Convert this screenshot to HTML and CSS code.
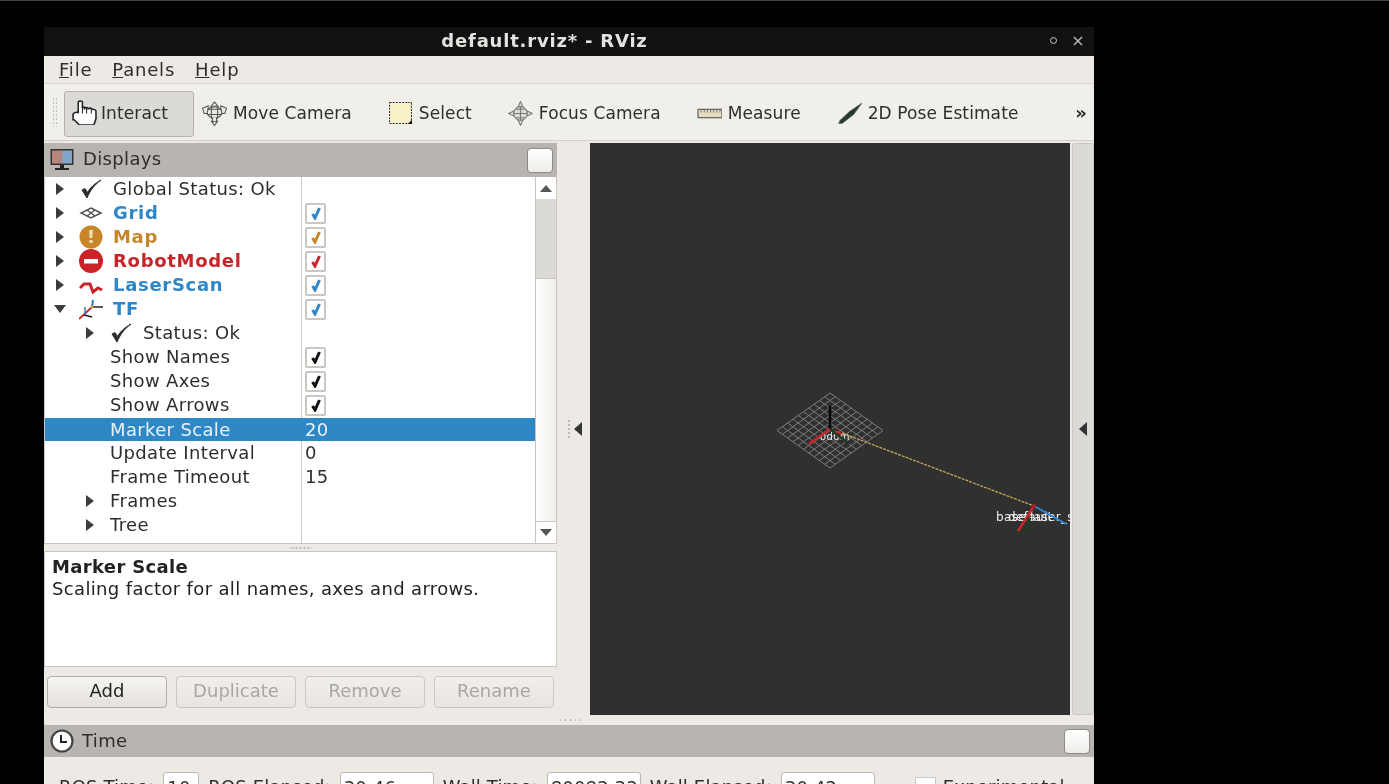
FILE: index.html
```html
<!DOCTYPE html>
<html lang="en">
<head>
    <meta charset="UTF-8">
    <title>default.rviz* - RViz</title>
    <link rel="stylesheet" href="styles.css">
</head>
<body>
<svg class="defs" width="0" height="0">
    <symbol id="tick" viewBox="0 0 14 14"><path d="M3.500 8 L6 12 L10.500 2" fill="none" stroke="currentColor" stroke-width="3"/></symbol>
    <symbol id="bigtick" viewBox="0 0 24 24"><path d="M3 13 L8 21 C11 14 15 8 22 3 C15 7 11 11 8.500 15.500 L6 11.500 Z" fill="#2b2f2b" stroke="#2b2f2b"/></symbol>
</svg>
<div class="window">
    <div class="titlebar">
        <span class="title">default.rviz* - RViz</span>
        <span class="win-btns"><span class="win-dot"></span><span class="win-x">×</span></span>
    </div>
    <div class="menubar">
        <span><u>F</u>ile</span>
        <span><u>P</u>anels</span>
        <span><u>H</u>elp</span>
    </div>
    <div class="toolbar">
        <div class="grip"></div>
        <div class="tool active">
            <svg class="tool-icon" viewBox="0 0 24 24"><path d="M6 12 V2.500 C6 0.500 10 0.500 10 2.500 V7 L12 7 V8 C13 7 15 7 15.500 8.500 C17 7.500 18.500 7.500 19 9 C21 8.500 23 9.500 23 11 V18 L21 24 H7 L2 19 H1 V13.500 C2 12 4.500 11.500 6 12 Z" fill="#fff" stroke="#222" stroke-width="1.500"/><path d="M10 7 V13 M14 8 V13 M18.500 9 V13" stroke="#222"/></svg>
            <span>Interact</span>
        </div>
        <div class="tool">
            <svg class="tool-icon" viewBox="0 0 24 24"><g fill="#e9e7e2" stroke="#555" stroke-width="1"><path d="M12 1 L15.500 5 H8.500 Z"/><path d="M12 23.500 L15 19.500 H9 Z"/><path d="M0.500 7 L6 4.500 V12 H2 Z"/><path d="M23.500 7 L18 4.500 V12 H22 Z"/><ellipse cx="12" cy="11" rx="7" ry="5.500"/><path d="M9 5.500 V17 M15 5.500 V17 M5 8 H19 M5 13 H19 M10 16 V20 H14 V16"/></g></svg>
            <span>Move Camera</span>
        </div>
        <div class="tool">
            <svg class="tool-icon" viewBox="0 0 24 24"><rect x="1.500" y="1.500" width="21" height="20" fill="#f7f2c8" stroke="#333" stroke-width="1" stroke-dasharray="2 1"/><path d="M19 22 H23 V18 Z" fill="#111"/></svg>
            <span>Select</span>
        </div>
        <div class="tool">
            <svg class="tool-icon" viewBox="0 0 24 24"><g fill="#dedcd7" stroke="#777" stroke-width="1"><path d="M12 0.500 L14.500 6 H9.500 Z"/><path d="M12 23.500 L14.500 18 H9.500 Z"/><path d="M0.500 12 L6 9.500 V14.500 Z"/><path d="M23.500 12 L18 9.500 V14.500 Z"/><circle cx="12" cy="12" r="6.500"/><path d="M12 5.500 V18.500 M5.500 12 H18.500 M8 8 H16 M8 16 H16"/></g></svg>
            <span>Focus Camera</span>
        </div>
        <div class="tool">
            <svg class="tool-icon" viewBox="0 0 24 24"><rect x="1" y="8" width="23" height="8" fill="#e6dcc0" stroke="#666" stroke-width="1.200"/><path d="M4 8.500 V11 M7 8.500 V11 M10 8.500 V11 M13 8.500 V11 M16 8.500 V11 M19 8.500 V11 M22 8.500 V11" stroke="#777"/></svg>
            <span>Measure</span>
        </div>
        <div class="tool">
            <svg class="tool-icon" viewBox="0 0 24 24"><path d="M1.500 21.500 L3 18.500 L12 10 L24 2 L16 13 L5 21.500 Z" fill="#243a2a" stroke="#666" stroke-width="0.700"/></svg>
            <span>2D Pose Estimate</span>
        </div>
        <span class="more">»</span>
    </div>

    <div class="main">
        <div class="dock">
            <div class="dock-head">
                <svg class="head-icon" viewBox="0 0 26 24"><rect x="1.500" y="1" width="23" height="16" fill="#333"/><rect x="3" y="2.500" width="10" height="13" fill="#b5867c"/><rect x="13" y="2.500" width="10" height="13" fill="#7fa5c9"/><path d="M11 17 H15 V20 H20 V22 H6 V20 H11 Z" fill="#222"/></svg>
                <span class="dock-title">Displays</span>
                <span class="head-btn"></span>
            </div>
            <div class="tree">
                <div class="rows">
                    <div class="row">
                        <div class="name-cell lv0"><span class="arrow"></span><svg class="row-icon"><use href="#bigtick"/></svg><span>Global Status: Ok</span></div>
                    </div>
                    <div class="row">
                        <div class="name-cell lv0 ok"><span class="arrow"></span>
                            <svg class="row-icon" viewBox="0 0 24 24"><g fill="none" stroke="#555" stroke-width="1.500"><path d="M12 7 L22 12 L12 17 L2 12 Z"/><path d="M8 9 L16 15 M16 9 L8 15"/></g></svg>
                            <span>Grid</span></div>
                        <span class="check blue"><svg><use href="#tick"/></svg></span>
                    </div>
                    <div class="row">
                        <div class="name-cell lv0 warn"><span class="arrow"></span>
                            <svg class="row-icon" viewBox="0 0 24 24"><circle cx="12" cy="12" r="11.500" fill="#c8862b"/><path d="M10 5 H14 L13.300 13 H10.700 Z M10.300 15 H13.700 V18 H10.300 Z" fill="#f1dcae"/></svg>
                            <span>Map</span></div>
                        <span class="check orange"><svg><use href="#tick"/></svg></span>
                    </div>
                    <div class="row">
                        <div class="name-cell lv0 err"><span class="arrow"></span>
                            <svg class="row-icon" viewBox="0 0 24 24"><circle cx="12" cy="12" r="12" fill="#cc2127"/><rect x="5" y="10" width="14" height="4.500" fill="#fff"/></svg>
                            <span>RobotModel</span></div>
                        <span class="check red"><svg><use href="#tick"/></svg></span>
                    </div>
                    <div class="row">
                        <div class="name-cell lv0 ok"><span class="arrow"></span>
                            <svg class="row-icon" viewBox="0 0 24 24"><path d="M1 15 L2 14 L5 11 L11 11 L14 19 L19 15 L23 17" fill="none" stroke="#c9242a" stroke-width="3"/></svg>
                            <span>LaserScan</span></div>
                        <span class="check blue"><svg><use href="#tick"/></svg></span>
                    </div>
                    <div class="row">
                        <div class="name-cell lv0 ok"><span class="arrow open"></span>
                            <svg class="row-icon" viewBox="0 0 24 24"><path d="M13 10 L14 3" stroke="#2e7fc4" stroke-width="2"/><path d="M13 10 H24" stroke="#222" stroke-width="1.500"/><path d="M13 10 L0 22" stroke="#c9242a" stroke-width="1.800"/><path d="M6 10 V18" stroke="#2e7fc4" stroke-width="1.500"/><path d="M5 18 L13 20" stroke="#222" stroke-width="1.500"/><circle cx="13" cy="10" r="1.500" fill="#d8a23a"/></svg>
                            <span>TF</span></div>
                        <span class="check blue"><svg><use href="#tick"/></svg></span>
                    </div>
                    <div class="row">
                        <div class="name-cell lv1"><span class="arrow"></span><svg class="row-icon"><use href="#bigtick"/></svg><span>Status: Ok</span></div>
                    </div>
                    <div class="row">
                        <div class="name-cell lv2"><span>Show Names</span></div>
                        <span class="check"><svg><use href="#tick"/></svg></span>
                    </div>
                    <div class="row">
                        <div class="name-cell lv2"><span>Show Axes</span></div>
                        <span class="check"><svg><use href="#tick"/></svg></span>
                    </div>
                    <div class="row">
                        <div class="name-cell lv2"><span>Show Arrows</span></div>
                        <span class="check"><svg><use href="#tick"/></svg></span>
                    </div>
                    <div class="row selected">
                        <div class="name-cell lv2"><span>Marker Scale</span></div>
                        <span class="value">20</span>
                    </div>
                    <div class="row">
                        <div class="name-cell lv2"><span>Update Interval</span></div>
                        <span class="value">0</span>
                    </div>
                    <div class="row">
                        <div class="name-cell lv2"><span>Frame Timeout</span></div>
                        <span class="value">15</span>
                    </div>
                    <div class="row">
                        <div class="name-cell lv3"><span class="arrow"></span><span>Frames</span></div>
                    </div>
                    <div class="row">
                        <div class="name-cell lv3"><span class="arrow"></span><span>Tree</span></div>
                    </div>
                </div>
                <div class="scrollbar">
                    <div class="scroll-btn"><span class="up"></span></div>
                    <div class="thumb"></div>
                    <div class="scroll-rest"></div>
                    <div class="scroll-btn bottom"><span class="down"></span></div>
                </div>
            </div>
            <div class="handle"></div>
            <div class="desc">
                <b>Marker Scale</b>
                <span>Scaling factor for all names, axes and arrows.</span>
            </div>
            <div class="dock-btns">
                <button>Add</button>
                <button disabled>Duplicate</button>
                <button disabled>Remove</button>
                <button disabled>Rename</button>
            </div>
        </div>

        <div class="split"><span class="dots"></span><span class="tri"></span></div>

        <div class="view">
            <svg viewBox="0 0 480 572" width="480" height="572">
                <g transform="matrix(5.3 3.75 -5.3 3.75 240 250)" fill="none" stroke="#7c7c7a" stroke-width="1">
                    <path vector-effect="non-scaling-stroke" d="M0 0H10M0 1H10M0 2H10M0 3H10M0 4H10M0 5H10M0 6H10M0 7H10M0 8H10M0 9H10M0 10H10M0 0V10M1 0V10M2 0V10M3 0V10M4 0V10M5 0V10M6 0V10M7 0V10M8 0V10M9 0V10M10 0V10"/>
                </g>
                <text class="frame-label small" x="230" y="297">odom</text>
                <path d="M240 286 V263" stroke="#08080c" stroke-width="2.500"/>
                <path d="M240 286 L219 301" stroke="#c8262a" stroke-width="2.500"/>
                <path d="M240 286 L259 301" stroke="#1c3d1e" stroke-width="2.500"/>
                <path d="M245 288 L252 291" stroke="#c8262a" stroke-width="2"/>
                <path d="M252 290 L444 363" stroke="#c4a456" stroke-width="1.300" stroke-dasharray="3 1"/>
                <text class="frame-label" x="406" y="378">base</text>
                <text class="frame-label" x="418" y="378">default</text>
                <text class="frame-label" x="440" y="378">laser_scan</text>
                <path d="M444 363 L476 381" stroke="#2e86d6" stroke-width="2"/>
                <path d="M444 363 L428 388" stroke="#c8262a" stroke-width="2.500"/>
                <path d="M440 375 L437 388" stroke="#1c3d1e" stroke-width="2.500"/>
                <circle cx="444" cy="363" r="2" fill="#a8242a"/>
            </svg>
        </div>

        <div class="right-split"><span class="tri"></span></div>
    </div>

    <div class="hsplit"></div>

    <div class="time-head">
        <svg class="clock" viewBox="0 0 24 24"><circle cx="12" cy="12" r="10.500" fill="#fff" stroke="#444" stroke-width="2.200"/><path d="M11 6 V13 H17" fill="none" stroke="#222" stroke-width="2"/></svg>
        <span class="dock-title">Time</span>
        <span class="head-btn"></span>
    </div>

    <div class="time-row">
        <span class="lbl">ROS Time:</span><span class="field f-small">10</span>
        <span class="lbl">ROS Elapsed:</span><span class="field">30.46</span>
        <span class="lbl">Wall Time:</span><span class="field">80082.33</span>
        <span class="lbl">Wall Elapsed:</span><span class="field f-last">30.42</span>
        <span class="exp-box"></span><span class="lbl">Experimental</span>
    </div>
</div>
</body>
</html>
```

FILE: styles.css
```css
* {
    box-sizing: border-box;
}

html, body {
    margin: 0;
    height: 784px;
    overflow: hidden;
    background: #000;
}

body {
    padding: 27px 0 0 44px;
    border-top: 1px solid #444;
    font-family: "DejaVu Sans", sans-serif;
    font-size: 18px;
    letter-spacing: 0.35px;
    color: #2e2e2c;
}

.defs {
    position: absolute;
}

.window {
    width: 1050px;
    height: 757px;
    margin-top: -1px;
    background: #edeae5;
    overflow: hidden;
    filter: blur(0.5px);
}

/* Title and menu */
.titlebar {
    height: 29px;
    padding: 0 49px 2px 0;
    background: #111;
    color: #e4e2df;
    display: flex;
    align-items: center;
    justify-content: center;
    position: relative;
}

.title {
    font-weight: bold;
    font-size: 18px;
    letter-spacing: 0.8px;
}

.win-btns {
    position: absolute;
    right: 9px;
    top: 4px;
    display: flex;
    align-items: center;
    gap: 14px;
    color: #bbb;
    font-size: 16px;
}

.win-dot {
    width: 7px;
    height: 7px;
    border: 1.500px solid #ccc;
    border-radius: 50%;
}

.menubar {
    height: 28px;
    display: flex;
    gap: 20px;
    align-items: center;
    padding-left: 15px;
    letter-spacing: 0.8px;
    border-bottom: 1px solid #dad7d2;
}

/* Toolbar */
.toolbar {
    height: 57px;
    background: #f1efea;
    border-bottom: 1px solid #d2cfca;
    display: flex;
    align-items: center;
    padding-left: 8px;
    font-size: 17px;
    letter-spacing: 0.1px;
    position: relative;
}

.grip {
    width: 6px;
    height: 30px;
    margin-right: 6px;
    background: radial-gradient(#c4c1bc 1px, transparent 1px) 0 0 / 3px 4px;
}

.tool {
    display: flex;
    align-items: center;
    gap: 6px;
    margin-right: 36px;
    padding-top: 2px;
    white-space: nowrap;
}

.tool.active {
    width: 130px;
    height: 46px;
    gap: 4px;
    padding: 0 0 2px 7px;
    margin: 3px 8px 0 0;
    background: #dcdad6;
    border: 1px solid #b5b1ac;
    border-radius: 3px;
}

.tool-icon {
    width: 25px;
    height: 25px;
    flex: none;
}

.more {
    position: absolute;
    right: 7px;
    font-weight: bold;
    font-size: 18px;
    color: #222;
}

/* Main area */
.main {
    display: flex;
    height: 577px;
    padding-top: 2px;
}

.dock {
    width: 513px;
    flex: none;
    display: flex;
    flex-direction: column;
}

.dock-head, .time-head {
    height: 34px;
    flex: none;
    background: #b8b4b0;
    display: flex;
    align-items: center;
    padding: 0 4px 4px 5px;
}

.head-icon {
    width: 26px;
    height: 24px;
    margin-top: 3px;
}

.dock-title {
    margin-left: 8px;
    flex: 1;
}

.head-btn {
    width: 26px;
    height: 25px;
    margin-top: 4px;
    background: linear-gradient(#fff, #eeece8);
    border: 1px solid #8e8a86;
    border-radius: 4px;
}

.tree {
    height: 367px;
    flex: none;
    display: flex;
    background: #fff;
    border: 1px solid #c9c6c1;
    border-top: 0;
}

.rows {
    flex: 1;
    background: linear-gradient(#cfcdc9, #cfcdc9) 256px 0 / 1px 100% no-repeat;
}

.row {
    height: 24px;
    padding-bottom: 1px;
    display: flex;
    align-items: center;
}

.name-cell {
    width: 260px;
    flex: none;
    display: flex;
    align-items: center;
}

.lv0 { padding-left: 11px; }
.lv1 { padding-left: 41px; }
.lv2 { padding-left: 65px; }
.lv3 { padding-left: 41px; }

.row-icon { margin: 0 10px 0 13px; }
.lv3 .arrow { margin-right: 16px; }

.ok, .warn, .err {
    font-weight: bold;
    letter-spacing: 0.7px;
}

.ok { color: #2f86c8; }
.warn { color: #c8862b; }
.err { color: #c6252b; }

.arrow {
    flex: none;
    width: 0;
    height: 0;
    border-left: 8px solid #3c3c3a;
    border-top: 6px solid transparent;
    border-bottom: 6px solid transparent;
    box-sizing: content-box;
    margin-right: 2px;
}

.arrow.open {
    border-top: 8px solid #3c3c3a;
    border-left: 6px solid transparent;
    border-right: 6px solid transparent;
    border-bottom: 0;
    margin-right: 0;
    margin-left: -2px;
}

.row-icon {
    width: 24px;
    height: 24px;
    flex: none;
}

.check {
    width: 21px;
    height: 21px;
    margin-top: 1px;
    background: #fff;
    border: 2px solid #cbc8c3;
    border-radius: 2px;
    color: #111;
    display: flex;
    align-items: center;
    justify-content: center;
}

.check svg {
    width: 14px;
    height: 14px;
}

.blue { color: #2f86c8; }
.orange { color: #c8862b; }
.red { color: #c6252b; }

.selected {
    margin-top: 1px;
    height: 23px;
    background: #2f88c6;
    color: #eaf2f8;
}

.scrollbar {
    width: 21px;
    flex: none;
    border-left: 1px solid #c9c6c1;
    display: flex;
    flex-direction: column;
    background: linear-gradient(to right, #fff, #f0eeea);
}

.scroll-btn {
    height: 22px;
    flex: none;
    display: flex;
    align-items: center;
    justify-content: center;
    background: #fff;
}

.scroll-btn.bottom {
    border-top: 1px solid #c9c6c1;
}

.up {
    border-bottom: 7px solid #555;
    border-left: 6px solid transparent;
    border-right: 6px solid transparent;
}

.down {
    border-top: 7px solid #555;
    border-left: 6px solid transparent;
    border-right: 6px solid transparent;
}

.thumb {
    height: 80px;
    flex: none;
    background: #dcdad6;
    border-bottom: 1px solid #c9c6c1;
}

.scroll-rest {
    flex: 1;
}

.handle {
    height: 7px;
    flex: none;
    padding: 0 245px;
    background: radial-gradient(#bdbab5 0.7px, transparent 0.8px) center / 4px 4px repeat-x content-box;
}

.desc {
    height: 116px;
    flex: none;
    background: #fff;
    border: 1px solid #c9c6c1;
    padding: 4px 7px;
    display: flex;
    flex-direction: column;
    line-height: 22px;
    color: #222;
}

.dock-btns {
    display: flex;
    gap: 9px;
    padding: 9px 3px 0;
}

.dock-btns button {
    width: 120px;
    height: 32px;
    padding: 0 0 3px;
    font: 18px "DejaVu Sans", sans-serif;
    color: #222;
    background: linear-gradient(#f6f5f1, #e4e1dc);
    border: 1px solid #b0aca7;
    border-radius: 4px;
}

.dock-btns button:disabled {
    color: #a9a7a3;
    background: linear-gradient(#f1efeb, #e8e5e0);
    border-color: #cbc8c3;
}

.split {
    width: 33px;
    height: 572px;
    flex: none;
    display: flex;
    align-items: center;
    justify-content: flex-end;
    padding-right: 8px;
    gap: 3px;
}

.dots {
    width: 4px;
    height: 20px;
    background: radial-gradient(#bdbab5 1px, transparent 1px) 0 0 / 4px 4px;
}

.tri {
    border-right: 8px solid #333;
    border-top: 7px solid transparent;
    border-bottom: 7px solid transparent;
}

.view {
    width: 480px;
    height: 572px;
    flex: none;
    background: #303030;
    overflow: hidden;
}

.view svg {
    display: block;
}

.frame-label {
    fill: #eee;
    font: 12px "DejaVu Sans", sans-serif;
}

.frame-label.small {
    font-size: 10px;
}

.right-split {
    width: 22px;
    height: 572px;
    margin-left: 2px;
    flex: none;
    background: #dcdad6;
    border: 1px solid #cbc8c3;
    border-radius: 2px;
    display: flex;
    align-items: center;
    justify-content: center;
}

.hsplit {
    height: 7px;
    padding: 0 512px 0 514px;
    background: radial-gradient(#bdbab5 0.8px, transparent 0.9px) 0 0 / 5px 4px repeat-x content-box;
}

.time-head {
    height: 32px;
    padding: 0 4px 0 6px;
}

.time-head .head-btn {
    margin-top: 0;
}

.time-head .dock-title {
    padding-bottom: 2px;
}

.clock {
    width: 24px;
    height: 24px;
}

.time-row {
    display: flex;
    align-items: flex-start;
    padding: 15px 0 0 15px;
    white-space: nowrap;
    letter-spacing: 0.15px;
}

.lbl {
    margin-top: 4px;
}

.field {
    width: 94px;
    height: 32px;
    margin: 0 9px;
    padding: 4px 3px;
    background: #fff;
    border: 1px solid #bdbab5;
    border-radius: 3px;
}

.f-small {
    width: 36px;
}

.f-last {
    margin-right: 40px;
}

.exp-box {
    width: 21px;
    height: 21px;
    margin: 5px 7px 0 0;
    background: #fff;
    border: 1px solid #cbc8c3;
    flex: none;
}
```
